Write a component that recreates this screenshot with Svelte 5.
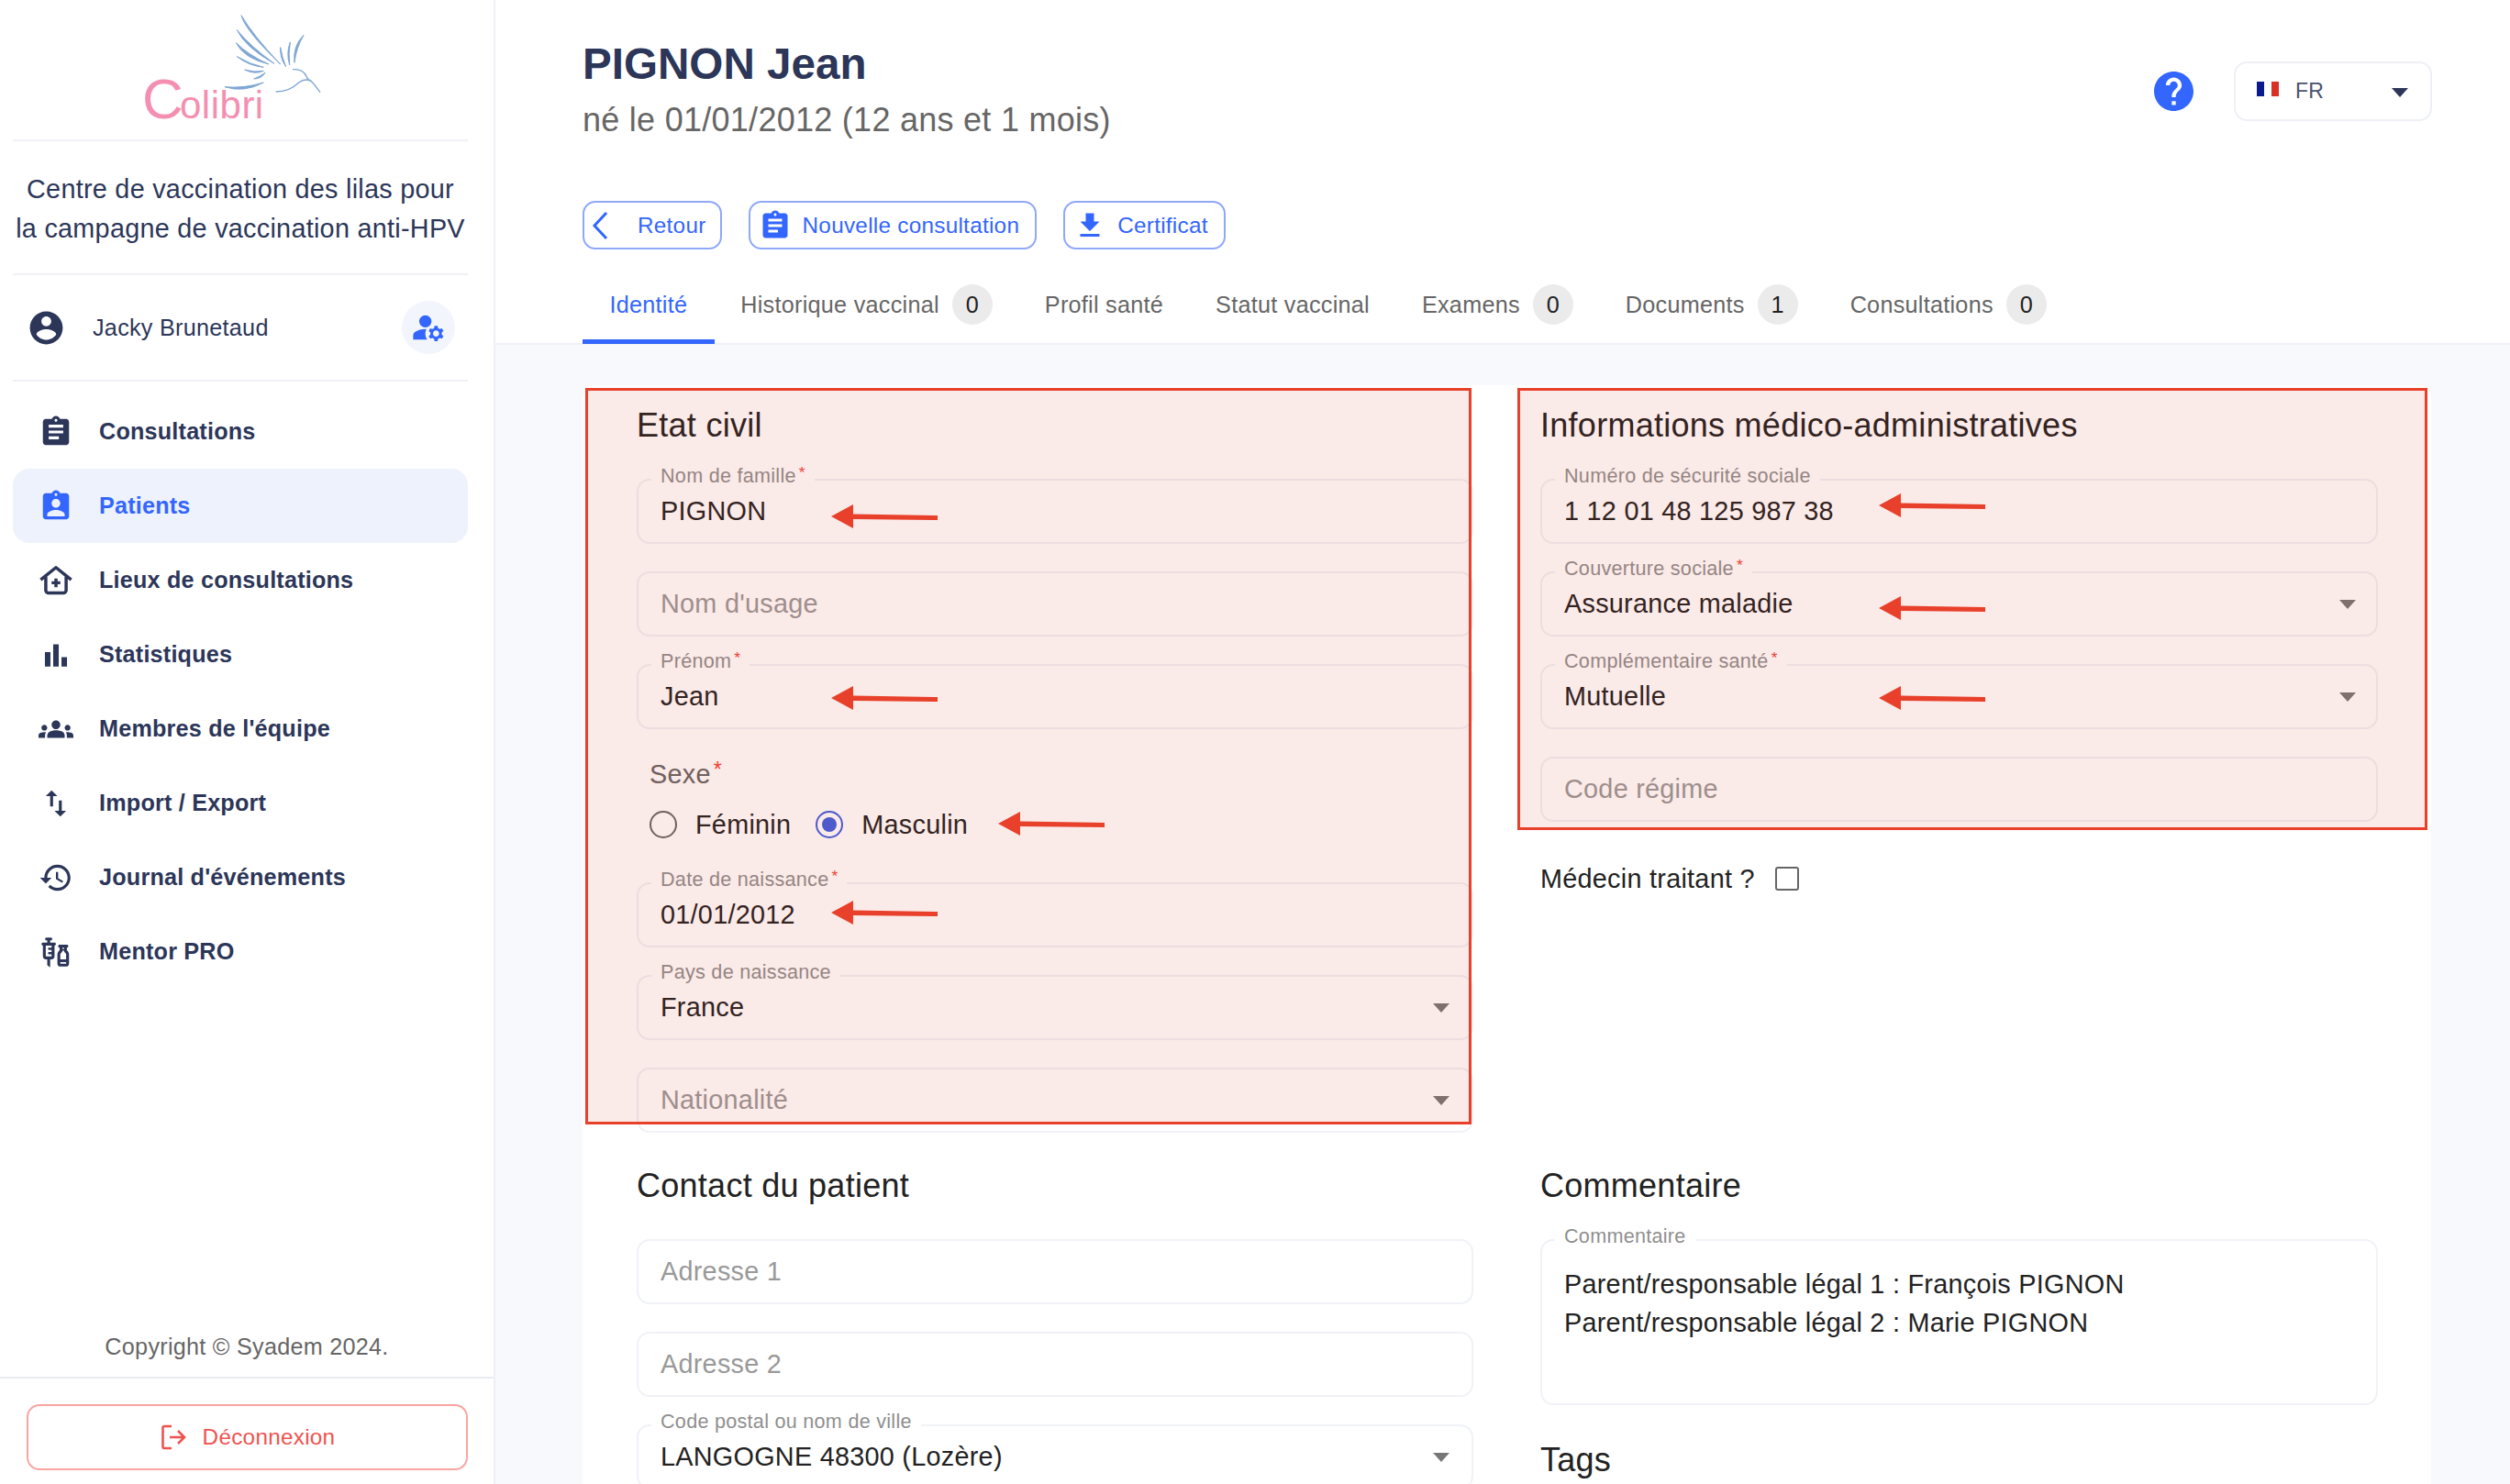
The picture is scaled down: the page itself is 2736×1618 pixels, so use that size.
<script>
  const nav = [
    { label: 'Consultations', icon: 'assign' },
    { label: 'Patients', icon: 'ind', active: true },
    { label: 'Lieux de consultations', icon: 'house' },
    { label: 'Statistiques', icon: 'bar' },
    { label: "Membres de l'équipe", icon: 'groups' },
    { label: 'Import / Export', icon: 'swap' },
    { label: "Journal d'événements", icon: 'history' },
    { label: 'Mentor PRO', icon: 'vaccine' }
  ];
  const tabs = [
    { label: 'Identité', active: true },
    { label: 'Historique vaccinal', count: 0 },
    { label: 'Profil santé' },
    { label: 'Statut vaccinal' },
    { label: 'Examens', count: 0 },
    { label: 'Documents', count: 1 },
    { label: 'Consultations', count: 0 }
  ];
  const paths = {
    assign: 'M19 3h-4.18C14.4 1.84 13.3 1 12 1c-1.3 0-2.4.84-2.82 2H5c-1.1 0-2 .9-2 2v14c0 1.1.9 2 2 2h14c1.1 0 2-.9 2-2V5c0-1.1-.9-2-2-2zm-7 0c.55 0 1 .45 1 1s-.45 1-1 1-1-.45-1-1 .45-1 1-1zm2 14H7v-2h7v2zm3-4H7v-2h10v2zm0-4H7V7h10v2z',
    ind: 'M19 3h-4.18C14.4 1.84 13.3 1 12 1c-1.3 0-2.4.84-2.82 2H5c-1.1 0-2 .9-2 2v14c0 1.1.9 2 2 2h14c1.1 0 2-.9 2-2V5c0-1.1-.9-2-2-2zm-7 0c.55 0 1 .45 1 1s-.45 1-1 1-1-.45-1-1 .45-1 1-1zm0 4c1.66 0 3 1.34 3 3s-1.34 3-3 3-3-1.34-3-3 1.34-3 3-3zm6 12H6v-1.4c0-2 4-3.1 6-3.1s6 1.1 6 3.1V19z',
    bar: 'M4.4 10.100h3.800V20H4.400zM10.100 4.800h3.800V20h-3.800zM15.800 13.600h3.800V20h-3.800z',
    groups: 'M12 12.75c1.63 0 3.07.39 4.24.9 1.08.48 1.76 1.56 1.76 2.73V18H6v-1.61c0-1.18.68-2.26 1.76-2.73 1.17-.52 2.61-.91 4.24-.91zM4 13c1.1 0 2-.9 2-2s-.9-2-2-2-2 .9-2 2 .9 2 2 2zm1.13 1.1c-.37-.06-.74-.1-1.13-.1-.99 0-1.93.21-2.78.58C.48 14.9 0 15.62 0 16.43V18h4.5v-1.61c0-.83.23-1.61.63-2.29zM20 13c1.1 0 2-.9 2-2s-.9-2-2-2-2 .9-2 2 .9 2 2 2zm4 3.43c0-.81-.48-1.53-1.22-1.85-.85-.37-1.79-.58-2.78-.58-.39 0-.76.04-1.13.1.4.68.63 1.46.63 2.29V18H24v-1.57zM12 6c1.66 0 3 1.34 3 3s-1.34 3-3 3-3-1.34-3-3 1.34-3 3-3z',
    swap: 'M9 3 5 6.99h3V14h2V6.99h3L9 3zm7 14.01V10h-2v7.01h-3L15 21l4-3.99h-3z',
    history: 'M13 3c-4.97 0-9 4.03-9 9H1l3.89 3.89.07.14L9 12H6c0-3.87 3.13-7 7-7s7 3.13 7 7-3.13 7-7 7c-1.93 0-3.68-.79-4.94-2.06l-1.42 1.42C8.27 19.99 10.51 21 13 21c4.97 0 9-4.03 9-9s-4.03-9-9-9zm-1 5v5l4.28 2.54.72-1.21-3.5-2.08V8H12z',
    vaccine: 'M11 5.500H8V4h.5c.55 0 1-.45 1-1s-.45-1-1-1h-3c-.55 0-1 .45-1 1s.45 1 1 1H6v1.500H3c-.55 0-1 .45-1 1s.45 1 1 1V15c0 1.100.9 2 2 2h1v4l2 1.500V17h1c1.100 0 2-.9 2-2V7.500c.55 0 1-.45 1-1s-.45-1-1-1zM9 9H7.250c-.41 0-.75.34-.75.75s.34.75.75.75H9V12H7.250c-.41 0-.75.34-.75.75s.34.75.75.75H9V15H5V7.500h4V9zm10.500 1.500V9c.55 0 1-.45 1-1s-.45-1-1-1h-5c-.55 0-1 .45-1 1s.45 1 1 1v1.500c0 .5-1.500 1.160-1.500 3V20c0 1.100.9 2 2 2h4c1.100 0 2-.9 2-2v-6.500c0-1.840-1.500-2.500-1.500-3zM16.500 9h1v1h-1V9zM19 20h-4v-1h4v1zm0-3h-4v-3.500c0-1 1.500-1.200 1.500-2.500h1c0 1.300 1.500 1.500 1.500 2.500V17z'
  };
</script>

{#snippet arrow(cls)}
  <svg class="arrow {cls}" viewBox="0 0 118 26" width="118" height="26"><path d="M0 13 24 0v10.5l92 1.5v5l-92-1V26z" /></svg>
{/snippet}

{#snippet field(label, value, req, opts = {})}
  <div class="field" class:tall={opts.tall}>
    {#if label}<span class="legend">{label}{#if req}<i>*</i>{/if}</span>{/if}
    {#if opts.placeholder}<span class="placeholder">{opts.placeholder}</span>{/if}
    {#if value}<span class="value">{value}</span>{/if}
    {#if opts.select}<span class="caret"></span>{/if}
    {#if opts.arrow}{@render arrow(opts.arrow)}{/if}
  </div>
{/snippet}

<div class="app">
  <aside class="sidebar">
    <div class="logo">
      <svg viewBox="0 0 260 150" width="260" height="150">
        <text x="35" y="129" class="logo-c">C</text>
        <text x="76" y="129" class="logo-t">olibri</text>
        <g transform="translate(-1 0) scale(.3333)" class="bird">
          <path d="M432 50Q445 100 560 210 470 115 432 50z" />
          <path d="M418 98Q445 155 540 208 460 150 418 98z" />
          <path d="M415 140Q440 190 522 210 455 180 415 140z" />
          <path d="M418 185Q455 215 505 220 460 210 418 185z" />
          <path d="M443 228Q475 245 505 232 475 238 443 228z" />
          <path d="M473 258Q498 258 510 238 495 250 473 258z" />
          <path d="M378 284Q440 305 505 270 440 290 378 284z" />
          <path d="M560 155Q558 190 578 218 566 190 560 155z" />
          <path d="M592 138Q578 175 590 212 586 175 592 138z" />
          <path d="M636 115Q600 150 606 205 612 155 636 115z" />
          <path class="line" d="M545 300Q590 300 620 270 640 255 660 265 675 280 690 302" />
          <path class="line" d="M600 227Q635 225 645 250 650 262 660 265" />
        </g>
      </svg>
    </div>
    <p class="centre">Centre de vaccination des lilas pour la campagne de vaccination anti-HPV</p>
    <div class="user">
      <svg class="user-ic" viewBox="0 0 24 24" width="43" height="43"><path d="M12 2C6.48 2 2 6.48 2 12s4.48 10 10 10 10-4.48 10-10S17.52 2 12 2zm0 3c1.66 0 3 1.34 3 3s-1.34 3-3 3-3-1.34-3-3 1.34-3 3-3zm0 14.2c-2.5 0-4.71-1.28-6-3.22.03-1.99 4-3.08 6-3.08 1.99 0 5.97 1.09 6 3.08-1.29 1.94-3.5 3.22-6 3.22z"/></svg>
      <span class="user-name">Jacky Brunetaud</span>
      <span class="gear">
        <svg viewBox="0 0 24 24" width="40" height="40"><path d="M10.67 13.02c-.22-.01-.44-.02-.67-.02-2.42 0-4.68.67-6.61 1.82-.88.52-1.39 1.5-1.39 2.53V20h9.26c-.79-1.13-1.26-2.51-1.26-4 0-1.07.25-2.07.67-2.98zM10 12c2.21 0 4-1.79 4-4s-1.79-4-4-4-4 1.79-4 4 1.79 4 4 4zM20.75 16c0-.22-.03-.42-.06-.63l1.14-1.01-1-1.73-1.45.49c-.32-.27-.68-.48-1.08-.63L18 11h-2l-.3 1.49c-.4.15-.76.36-1.08.63l-1.45-.49-1 1.73 1.14 1.01c-.03.21-.06.41-.06.63s.03.42.06.63l-1.14 1.01 1 1.73 1.45-.49c.32.27.68.48 1.08.63L16 21h2l.3-1.49c.4-.15.76-.36 1.08-.63l1.45.49 1-1.73-1.14-1.01c.03-.21.06-.41.06-.63zM17 18c-1.1 0-2-.9-2-2s.9-2 2-2 2 .9 2 2-.9 2-2 2z"/></svg>
      </span>
    </div>
    <nav class="nav">
      {#each nav as item}
        <div class="nav-item" class:active={item.active}>
          {#if item.icon === 'house'}
            <svg class="house" viewBox="0 0 24 24" width="38" height="38"><path d="M1.5 11.5 12 3l10.5 8.5M5 9.5V19a2 2 0 0 0 1.5 1.5h11A2 2 0 0 0 19 19V9.5M12 10.5v6M9 13.5h6"/></svg>
          {:else}
            <svg viewBox="0 0 24 24" width="38" height="38"><path d={paths[item.icon]} /></svg>
          {/if}
          <span>{item.label}</span>
        </div>
      {/each}
    </nav>
    <div class="copyright">Copyright © Syadem 2024.</div>
    <div class="logout-wrap">
      <div class="logout">
        <svg viewBox="0 0 30 30" width="30" height="30"><path d="M13 3H5a1.5 1.5 0 0 0-1.500 1.500v21A1.500 1.500 0 0 0 5 27h8M11 15h16M20 8l7 7-7 7" /></svg>
        <span>Déconnexion</span>
      </div>
    </div>
  </aside>

  <main class="main">
    <header class="header">
      <div class="top">
        <div>
          <h1>PIGNON Jean</h1>
          <div class="sub">né le 01/01/2012 (12 ans et 1 mois)</div>
        </div>
        <div class="top-right">
          <svg class="help" viewBox="2 2 20 20" width="43" height="43"><path d="M12 2C6.48 2 2 6.48 2 12s4.480 10 10 10 10-4.480 10-10S17.520 2 12 2zm1 17h-2v-2h2v2zm2.070-7.750-.9.920C13.450 12.900 13 13.500 13 15h-2v-.5c0-1.100.45-2.100 1.170-2.830l1.240-1.260c.37-.36.59-.86.59-1.410 0-1.100-.9-2-2-2s-2 .9-2 2H8c0-2.210 1.790-4 4-4s4 1.790 4 4c0 .88-.36 1.680-.93 2.250z"/></svg>
          <div class="lang">
            <span class="flag"><b></b><b></b><b></b></span>
            <span class="fr">FR</span>
            <span class="lang-caret"></span>
          </div>
        </div>
      </div>
      <div class="actions">
        <div class="btn btn-back">
          <svg viewBox="0 0 24 40" width="24" height="40"><path d="M19 6 6 20l13 14" /></svg>
          <span>Retour</span>
        </div>
        <div class="btn">
          <svg class="solid" viewBox="0 0 24 24" width="36" height="36"><path d={paths.assign} /></svg>
          <span>Nouvelle consultation</span>
        </div>
        <div class="btn">
          <svg class="solid" viewBox="0 0 24 24" width="36" height="36"><path d="M5 20h14v-2H5v2zM19 9h-4V3H9v6H5l7 7 7-7z" /></svg>
          <span>Certificat</span>
        </div>
      </div>
      <div class="tabs">
        {#each tabs as t}
          <div class="tab" class:active={t.active}>
            <span>{t.label}</span>
            {#if t.count !== undefined}<span class="badge">{t.count}</span>{/if}
          </div>
        {/each}
      </div>
    </header>

    <div class="card">
      <section class="col">
        <div class="annotated left">
          <h2>Etat civil</h2>
          {@render field('Nom de famille', 'PIGNON', true, { arrow: 'a-nom' })}
          {@render field('', '', false, { placeholder: "Nom d'usage" })}
          {@render field('Prénom', 'Jean', true, { arrow: 'a-prenom' })}
          <div class="sexe">
            <div class="sexe-label">Sexe<i>*</i></div>
            <div class="radios">
              <span class="radio"></span><span class="radio-text">Féminin</span>
              <span class="radio on"></span><span class="radio-text">Masculin</span>
              {@render arrow('a-sexe')}
            </div>
          </div>
          {@render field('Date de naissance', '01/01/2012', true, { arrow: 'a-date' })}
          {@render field('Pays de naissance', 'France', false, { select: true })}
          <div class="field last">
            <span class="placeholder">Nationalité</span><span class="caret"></span>
          </div>
          <div class="mark mark-left"></div>
        </div>
      </section>

      <section class="col">
        <div class="annotated right">
          <h2>Informations médico-administratives</h2>
          {@render field('Numéro de sécurité sociale', '1 12 01 48 125 987 38', false, { arrow: 'a-secu' })}
          {@render field('Couverture sociale', 'Assurance maladie', true, { select: true, arrow: 'a-couv' })}
          {@render field('Complémentaire santé', 'Mutuelle', true, { select: true, arrow: 'a-comp' })}
          <div class="field last">
            <span class="placeholder">Code régime</span>
          </div>
          <div class="mark mark-right"></div>
        </div>
        <div class="medecin"><span>Médecin traitant ?</span><span class="check"></span></div>
      </section>

      <section class="col">
        <h2>Contact du patient</h2>
        {@render field('', '', false, { placeholder: 'Adresse 1' })}
        {@render field('', '', false, { placeholder: 'Adresse 2' })}
        {@render field('Code postal ou nom de ville', 'LANGOGNE 48300 (Lozère)', false, { select: true })}
      </section>

      <section class="col">
        <h2>Commentaire</h2>
        <div class="field tall">
          <span class="legend">Commentaire</span>
          <div class="comment">Parent/responsable légal 1 : François PIGNON<br />Parent/responsable légal 2 : Marie PIGNON</div>
        </div>
        <h2 class="tags">Tags</h2>
      </section>
    </div>
  </main>
</div>

<style>
  :global(body) { margin: 0; background: #f8f9fd; }
  .app { display: flex; height: 1618px; width: 2736px; overflow: hidden; font-family: "Liberation Sans", Arial, sans-serif; color: #222; letter-spacing: .27px; }

  .sidebar { width: 540px; flex: none; box-sizing: border-box; background: #fff; border-right: 2px solid #eef0f6; display: flex; flex-direction: column; }
  .logo { height: 154px; margin: 0 28px 0 14px; border-bottom: 2px solid #f0f1f7; box-sizing: border-box; padding-left: 106px; }
  .logo svg { display: block; }
  .logo-c { font-size: 62px; fill: #f48fb1; letter-spacing: 0; }
  .logo-t { font-size: 42px; fill: #f48fb1; letter-spacing: .5px; }
  .bird path { fill: #7fa7d4; stroke: #7fa7d4; stroke-width: 3; }
  .bird .line { fill: none; stroke-width: 4; }
  .centre { margin: 0 28px 0 14px; height: 146px; box-sizing: border-box; padding: 31px 2px 0; text-align: center; font-size: 28.8px; line-height: 43px; color: #2c3659; border-bottom: 2px solid #f0f1f7; }
  .user { margin: 0 28px 0 14px; height: 116px; box-sizing: border-box; border-bottom: 2px solid #f0f1f7; display: flex; align-items: center; padding-left: 15px; }
  .user-ic { fill: #2c3659; flex: none; }
  .user-name { font-size: 25.2px; color: #2c3659; margin-left: 29px; flex: 1; }
  .gear { width: 58px; height: 58px; border-radius: 50%; background: #f3f5fd; display: flex; align-items: center; justify-content: center; margin-right: 14px; }
  .gear svg { fill: #3366ff; }

  .nav { padding: 14px 28px 0 14px; flex: 1; }
  .nav-item { height: 81px; border-radius: 18px; display: flex; align-items: center; padding-left: 28px; gap: 28px; color: #2c3659; font-size: 25.2px; font-weight: 700; letter-spacing: .2px; }
  .nav-item svg { fill: #2c3659; flex: none; }
  .nav-item.active { background: #eef2fd; color: #3366ff; }
  .nav-item.active svg { fill: #3366ff; }
  .nav-item svg.house { fill: none; stroke: #2c3659; stroke-width: 2.2; stroke-linejoin: round; }
  .copyright { text-align: center; font-size: 25.2px; line-height: 38px; color: #666; border-bottom: 2px solid #e8edf3; padding-bottom: 14px; }
  .logout-wrap { padding: 28px 28px 15px 29px; }
  .logout { height: 72px; box-sizing: border-box; border: 2px solid #f9a5a0; border-radius: 14px; display: flex; align-items: center; justify-content: center; gap: 17px; color: #ef5350; font-size: 24.3px; }
  .logout svg { fill: none; stroke: #ef5350; stroke-width: 2.6; }

  .main { flex: 1; min-width: 0; overflow: hidden; }
  .header { background: #fff; height: 376px; box-sizing: border-box; border-bottom: 2px solid #eef0f6; padding: 40px 85px 0 95px; }
  .top { display: flex; justify-content: space-between; align-items: center; height: 115px; }
  h1 { margin: 0; font-size: 47.6px; line-height: 60px; color: #2c3659; font-weight: 700; letter-spacing: 0; }
  .sub { margin-top: 7px; font-size: 36px; line-height: 48px; color: #666; }
  .top-right { display: flex; align-items: center; gap: 44px; margin-top: 4px; }
  .help { fill: #3366ff; display: block; }
  .lang { width: 216px; height: 65px; box-sizing: border-box; border: 2px solid #eef0f6; border-radius: 14px; display: flex; align-items: center; padding-left: 23px; }
  .flag { display: flex; width: 24px; height: 16px; margin-top: -5px; }
  .flag b { flex: 1; }
  .flag b:nth-child(1) { background: #0b1a8c; }
  .flag b:nth-child(2) { background: #fff; }
  .flag b:nth-child(3) { background: #d93025; }
  .fr { font-size: 23px; color: #4a5270; margin-left: 18px; flex: 1; }
  .lang-caret { width: 0; height: 0; border-left: 9px solid transparent; border-right: 9px solid transparent; border-top: 10px solid #2c3659; margin-right: 24px; margin-top: 3px; }

  .actions { display: flex; gap: 29px; margin-top: 64px; }
  .btn { height: 53px; box-sizing: border-box; border: 2px solid #8fa8f8; border-radius: 14px; display: flex; align-items: center; padding: 0 17px 0 9px; gap: 12px; color: #3366ff; font-size: 24.3px; }
  .btn svg.solid { fill: #3366ff; }
  .btn-back { padding: 0 15px 0 5px; gap: 29px; }
  .btn-back svg { fill: none; stroke: #3366ff; stroke-width: 3; }

  .tabs { display: flex; height: 86px; margin-top: 17px; }
  .tab { display: flex; align-items: center; gap: 14px; padding: 0 28.500px; font-size: 25.2px; color: #666; height: 86px; box-sizing: border-box; }
  .tab.active { color: #3366ff; border-bottom: 5px solid #3366ff; padding: 5px 29.500px 0; }
  .badge { min-width: 44px; height: 44px; border-radius: 22px; background: #ebebeb; color: #222; display: flex; align-items: center; justify-content: center; }

  .card { margin: 44px 86px 0 95px; background: #fff; border-radius: 14px 14px 0 0; padding: 21px 58px 60px 59px; display: grid; grid-template-columns: 912px 913px; column-gap: 73px; row-gap: 35px; align-items: start; }
  .col { min-width: 0; }
  .annotated { position: relative; }
  .mark { position: absolute; box-sizing: border-box; border: 3px solid #e8402a; background: rgba(205, 45, 25, 0.1); pointer-events: none; }
  .mark-left { left: -56px; right: 2px; top: -18px; bottom: 9px; }
  .mark-right { left: -25px; right: -54px; top: -18px; bottom: -9px; }

  h2 { margin: 0 0 35px; font-size: 36px; line-height: 46px; font-weight: 400; color: #222; }
  .field { position: relative; box-sizing: border-box; height: 71px; border: 2px solid #f0f2f7; border-radius: 14px; margin-bottom: 30px; display: flex; align-items: center; padding-left: 24px; }
  .field.last { margin-bottom: 0; }
  .field.tall { height: 181px; align-items: flex-start; margin-bottom: 0; }
  .legend { position: absolute; left: 14px; top: -18px; background: #fff; padding: 0 10px; font-size: 21.6px; line-height: 26px; color: #8f8f8f; }
  .legend i, .sexe-label i { color: #f44336; font-style: normal; font-size: .8em; margin-left: 3px; position: relative; top: -.3em; }
  .value { font-size: 28.8px; color: #222; }
  .placeholder { font-size: 28.8px; color: #999; }
  .caret { position: absolute; right: 24px; top: 29px; width: 0; height: 0; border-left: 9px solid transparent; border-right: 9px solid transparent; border-top: 10px solid #777; }
  .right .caret { right: 22px; }

  .arrow { position: absolute; z-index: 2; }
  .arrow path { fill: #e8402a; }
  .a-nom { left: 210px; top: 26px; }
  .a-prenom { left: 210px; top: 22px; }
  .a-date { left: 210px; top: 18px; }
  .a-secu { left: 367px; top: 14px; }
  .a-couv { left: 367px; top: 25px; }
  .a-comp { left: 367px; top: 22px; }
  .a-sexe { left: 380px; top: 5px; }

  .sexe { margin-bottom: 44px; padding-left: 14px; }
  .sexe-label { font-size: 28.8px; line-height: 38px; color: #666; }
  .radios { display: flex; align-items: center; height: 38px; margin-top: 15px; position: relative; font-size: 28.8px; }
  .radio { box-sizing: border-box; width: 30px; height: 30px; border: 2.5px solid #666; border-radius: 50%; flex: none; }
  .radio.on { border-color: #3f5fe0; position: relative; }
  .radio.on::after { content: ""; position: absolute; inset: 5px; border-radius: 50%; background: #3f5fe0; }
  .radio-text { margin-left: 20px; margin-right: 27px; }

  .medecin { margin-top: 44px; display: flex; align-items: center; gap: 22px; font-size: 28.8px; height: 36px; }
  .check { width: 26px; height: 26px; box-sizing: border-box; border: 2.5px solid #666; border-radius: 3px; }
  .comment { padding-top: 26px; font-size: 28.8px; line-height: 42px; }
  .tags { margin: 37px 0 0; }
</style>
